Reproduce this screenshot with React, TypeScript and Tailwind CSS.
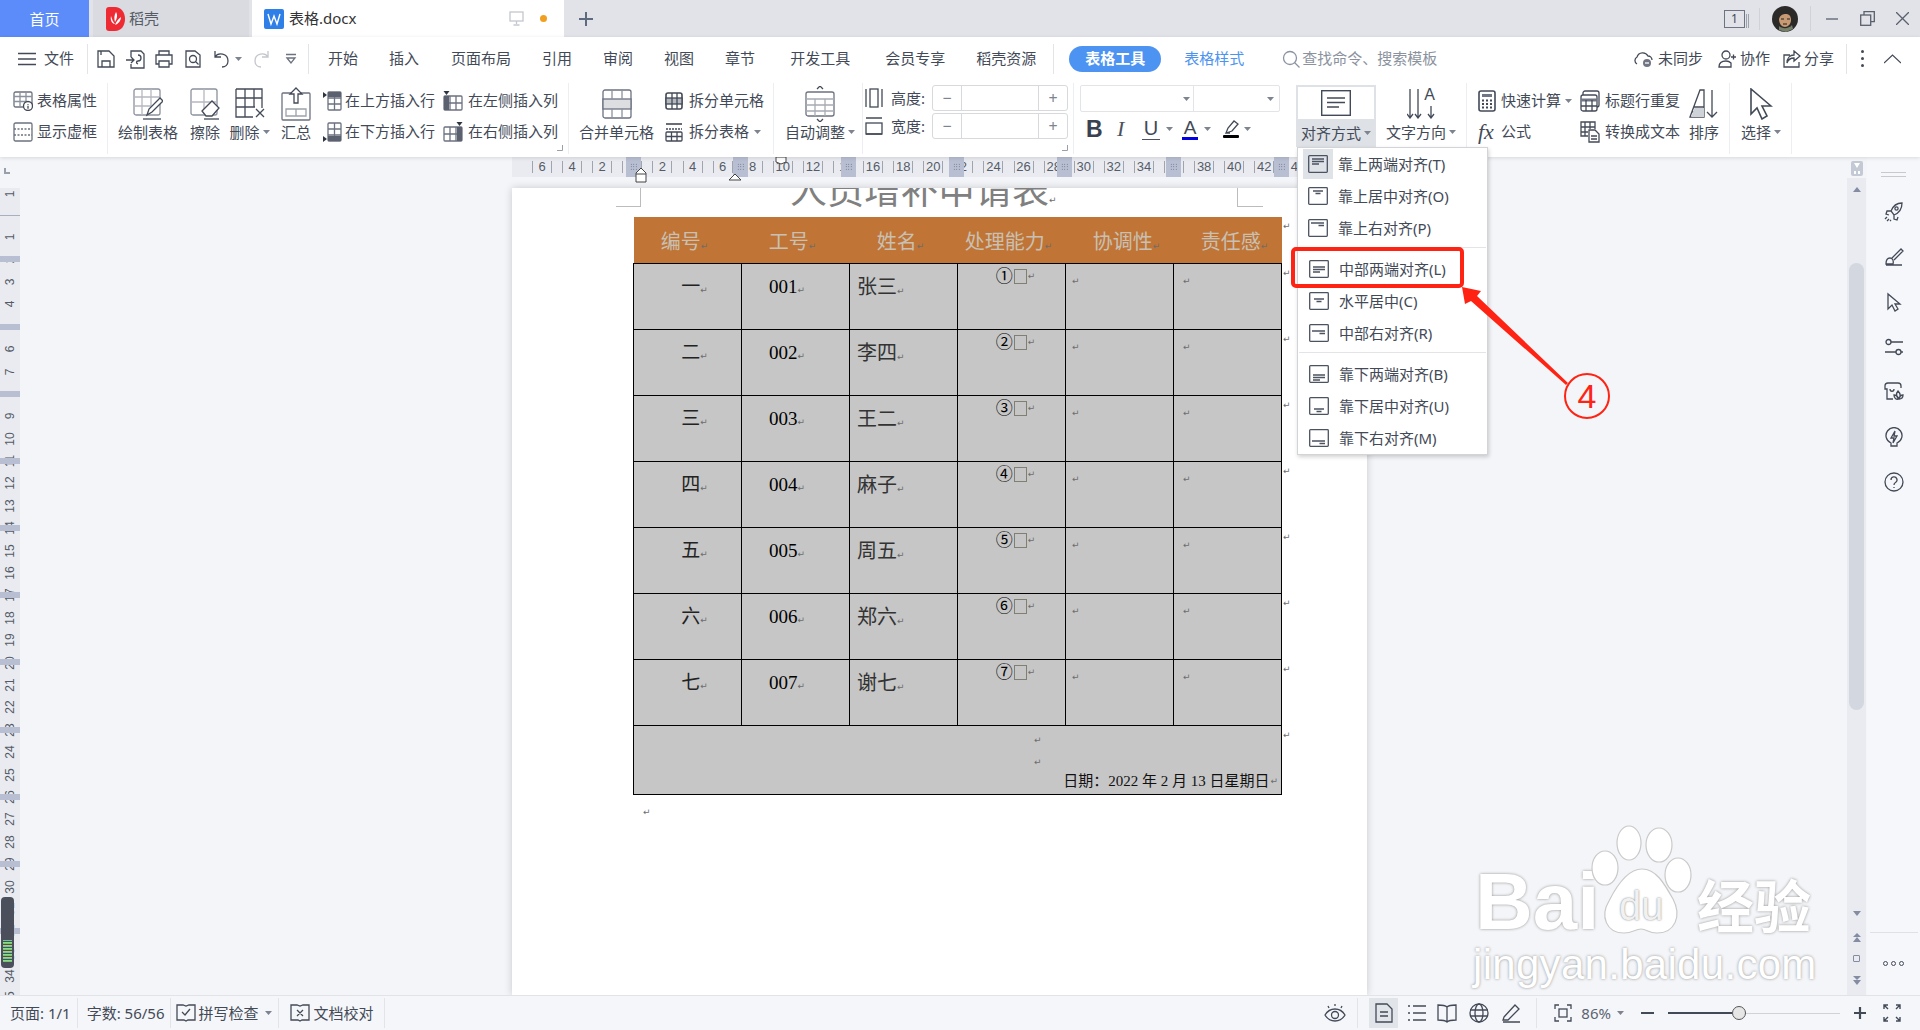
import React from 'react';

const ink = '#434a57';

function Ic({ w = 20, h = 20, children, className = '' }: { w?: number; h?: number; children: React.ReactNode; className?: string }) {
  return (
    <svg width={w} height={h} viewBox={`0 0 ${w} ${h}`} fill="none" stroke={ink} strokeWidth="1.3" className={`shrink-0 ${className}`}>
      {children}
    </svg>
  );
}

function Caret({ className = '' }: { className?: string }) {
  return (
    <svg width="7" height="4" viewBox="0 0 7 4" className={`shrink-0 ${className}`}>
      <path d="M0 0h7L3.5 4z" fill="#7d838f" />
    </svg>
  );
}

function Sep({ className = '' }: { className?: string }) {
  return <div className={`w-px h-[30px] bg-[#e2e4e8] shrink-0 ${className}`} />;
}

function Ret({ className = '' }: { className?: string }) {
  return <span className={`font-['DejaVu_Sans',sans-serif] text-[9px] leading-none text-[#6d6d6d] ${className}`}>↵</span>;
}

function Big({ icon, label, caret, className = '' }: { icon: React.ReactNode; label: string; caret?: boolean; className?: string }) {
  return (
    <div className={`flex flex-col items-center shrink-0 pt-[3px] ${className}`}>
      <div className="h-[36px] flex items-center justify-center">{icon}</div>
      <div className="h-[20px] flex items-center gap-[3px] whitespace-nowrap">
        {label}
        {caret && <Caret />}
      </div>
    </div>
  );
}

function Small({ icon, label, caret, gap = 'gap-[5px]' }: { icon: React.ReactNode; label: string; caret?: boolean; gap?: string }) {
  return (
    <div className={`h-[31px] flex items-center whitespace-nowrap ${gap}`}>
      {icon}
      <span>{label}</span>
      {caret && <Caret className="ml-[-1px]" />}
    </div>
  );
}

function InsertIcon({ dir }: { dir: 'up' | 'down' | 'left' | 'right' }) {
  if (dir === 'up' || dir === 'down') {
    const bar = dir === 'up' ? 1 : 14;
    return (
      <Ic w={20} h={20}>
        <rect x="6" y="1" width="13" height="18" rx="1" stroke="#6c7280" />
        <path d="M6 7H19M6 13H19M12.5 1V19" stroke="#6c7280" />
        <rect x="6" y={bar} width="13" height="5" fill="#5b616e" stroke="none" />
        <path d={`M1 ${bar}l4 3-4 3z`} fill="#2f3540" stroke="none" />
      </Ic>
    );
  }
  const x = dir === 'left' ? 1 : 14;
  return (
    <Ic w={20} h={20}>
      <rect x="1" y="5" width="18" height="14" rx="1" stroke="#6c7280" />
      <path d="M7 5V19M13 5V19M1 12H19" stroke="#6c7280" />
      <rect x={x} y="5" width="5" height="14" fill="#5b616e" stroke="none" />
      <path d={`M${x - 0.5} 0h6l-3 4z`} fill="#2f3540" stroke="none" />
    </Ic>
  );
}

function AlignGlyph({ v, h }: { v: 'top' | 'mid' | 'bot'; h: 'just' | 'center' | 'right' }) {
  const y = v === 'top' ? 4 : v === 'mid' ? 7 : 10;
  return (
    <svg width="20" height="18" viewBox="0 0 20 18" fill="none" stroke="#4b5260" strokeWidth="1.3" className="shrink-0">
      <rect x=".7" y=".7" width="18.6" height="16.6" rx=".8" />
      {h === 'just' && <path d={`M4 ${y}H16M4 ${y + 2.5}H16M4 ${y + 5}H11`} />}
      {h === 'center' && <path d={`M5 ${y + (v === 'bot' ? 2 : 0)}H15M7.5 ${y + 2.5 + (v === 'bot' ? 2 : 0)}H12.5`} />}
      {h === 'right' && <path d={`M3 ${y + (v === 'bot' ? 2 : 0)}H16M10.5 ${y + 2.5 + (v === 'bot' ? 2 : 0)}H16`} />}
    </svg>
  );
}

function Corner() {
  return (
    <svg width="6" height="6" viewBox="0 0 6 6" className="absolute right-[5px] bottom-[3px]">
      <path d="M5.5 0v5.5H0" stroke="#9aa0ab" fill="none" />
    </svg>
  );
}

function Tabs() {
  return (
    <div className="h-[37px] bg-[#e1e3e8] flex shrink-0 relative">
      <div className="w-[89px] bg-[#5b8cfa] text-white flex items-center justify-center pt-[1px]">首页</div>
      <div className="ml-[4px] w-[156px] bg-[#d9dbe0] flex items-center pl-[13px] text-[#555b66]">
        <svg width="19" height="24" viewBox="0 0 19 24" className="shrink-0">
          <path d="M0 3a3 3 0 0 1 3-3h6c6 0 10 5 10 12s-4 12-10 12H3a3 3 0 0 1-3-3z" fill="#ee2b33" />
          <path d="M10 5c2 3 1 7-1 10-1-3-1-7 1-10zM5 9c1 3 2 6 4 8-3 0-5-4-4-8zM15 10c0 4-3 7-6 8 1-3 3-6 6-8z" fill="#fff" />
        </svg>
        <span className="ml-[4px]">稻壳</span>
      </div>
      <div className="ml-[3px] w-[312px] bg-white flex items-center pl-[12px] text-[#333]">
        <svg width="20" height="20" viewBox="0 0 20 20" className="shrink-0">
          <rect width="20" height="20" rx="2" fill="#2f7fe8" />
          <path d="M4 5l3 10 3-8 3 8 3-10" fill="none" stroke="#fff" strokeWidth="1.4" />
        </svg>
        <span className="ml-[5px]">表格.docx</span>
        <svg width="15" height="15" viewBox="0 0 15 15" fill="none" stroke="#c3c7cf" strokeWidth="1.3" className="ml-[153px]">
          <rect x="1" y="1" width="13" height="9" />
          <path d="M7.5 10v3M4.5 14h6" />
        </svg>
        <div className="ml-[16px] w-[7px] h-[7px] rounded-full bg-[#f0a01e]" />
      </div>
      <svg width="14" height="14" viewBox="0 0 14 14" className="ml-[15px] self-center" stroke="#5e6a80" strokeWidth="2">
        <path d="M7 0v14M0 7h14" />
      </svg>
      <div className="ml-auto flex items-center mr-[11px]">
        <div className="flex items-end">
          <div className="w-[21px] h-[18px] border border-[#6d7380] text-[12px] leading-[16px] text-center text-[#434a57]">1</div>
          <div className="ml-[1px] w-[1px] h-[14px] bg-[#9da2ac]" />
          <div className="ml-[1px] w-[1px] h-[14px] bg-[#9da2ac]" />
        </div>
        <div className="ml-[10px] w-px h-[22px] bg-[#d0d2d7]" />
        <svg width="26" height="26" viewBox="0 0 26 26" className="ml-[12px]">
          <circle cx="13" cy="13" r="13" fill="#2b2a28" />
          <path d="M7 13c1-4 4-5 7-5s5 2 5 6-3 7-6 7-6-3-6-8z" fill="#c79a73" />
          <path d="M7 20c3 3 10 3 13-1l1 4-7 3-7-2z" fill="#77806a" />
          <path d="M9 13h3M15 13h3M11 18h4" stroke="#222" strokeWidth="1.2" />
        </svg>
        <div className="ml-[12px] w-px h-[25px] bg-[#d0d2d7]" />
        <svg width="12" height="2" viewBox="0 0 12 2" className="ml-[15px]"><path d="M0 1h12" stroke="#5a606c" strokeWidth="1.3" /></svg>
        <svg width="15" height="15" viewBox="0 0 15 15" fill="none" stroke="#5a606c" strokeWidth="1.3" className="ml-[22px]">
          <rect x=".7" y="4" width="10" height="10.3" />
          <path d="M4 4V.7h10.3v10H11" />
        </svg>
        <svg width="13" height="13" viewBox="0 0 13 13" className="ml-[21px]" stroke="#5a606c" strokeWidth="1.3"><path d="M0 0l13 13M13 0L0 13" /></svg>
      </div>
    </div>
  );
}

function TopMenu() {
  return (
    <div className="h-[43px] flex items-center whitespace-nowrap">
      <Ic w={18} h={14} className="ml-[18px]"><path d="M0 1.5h18M0 7h18M0 12.5h18" /></Ic>
      <span className="ml-[8px]">文件</span>
      <Sep className="ml-[13px]" />
      <Ic className="ml-[8px]"><path d="M2 2h11l5 5v11H2zM6 18v-6h8v6M5 2v4" /></Ic>
      <Ic className="ml-[10px]"><path d="M5 8V2h10l3 3v14H5v-4M0 11h8m-3-3l3 3-3 3M12 6a3 3 0 1 1 0 6c-2 0-2 2 0 3" /></Ic>
      <Ic className="ml-[8px]"><path d="M5 6V2h10v4M5 15H2V6h16v9h-3M5 12h10v6H5z" /></Ic>
      <Ic className="ml-[9px]"><path d="M3 18V2h9l5 4v12z" /><circle cx="10" cy="10" r="3.5" /><path d="M12.5 12.5l3 3" /></Ic>
      <Ic className="ml-[9px]"><path d="M3 2v6h6M3 8c3-5 13-4 13 4 0 4-3 6-6 6" /></Ic>
      <Caret className="ml-[3px]" />
      <svg width="20" height="20" viewBox="0 0 20 20" fill="none" stroke="#c3c6cc" strokeWidth="1.3" className="ml-[9px]"><path d="M17 2v6h-6M17 8c-3-5-13-4-13 4 0 4 3 6 6 6" /></svg>
      <Ic w={14} h={12} className="ml-[13px]"><path d="M2 1.500h10M3 5l4 5 4-5z" stroke="#6c7280" /></Ic>
      <Sep className="ml-[10px]" />
      <span className="ml-[19px]">开始</span>
      <span className="ml-[31px]">插入</span>
      <span className="ml-[32px]">页面布局</span>
      <span className="ml-[31px]">引用</span>
      <span className="ml-[31px]">审阅</span>
      <span className="ml-[31px]">视图</span>
      <span className="ml-[31px]">章节</span>
      <span className="ml-[35px]">开发工具</span>
      <span className="ml-[35px]">会员专享</span>
      <span className="ml-[31px]">稻壳资源</span>
      <Sep className="ml-[17px]" />
      <div className="ml-[15px] w-[92px] h-[26px] rounded-full bg-[#4c93f2] text-white flex items-center justify-center font-bold">表格工具</div>
      <span className="ml-[23px] text-[#4c93f2]">表格样式</span>
      <svg width="18" height="18" viewBox="0 0 18 18" fill="none" stroke="#8b93a3" strokeWidth="1.3" className="ml-[38px]"><circle cx="8" cy="8" r="6.5" /><path d="M12.5 12.5l5 5" /></svg>
      <span className="ml-[2px] text-[#8b929e]">查找命令、搜索模板</span>
      <div className="ml-auto flex items-center mr-[19px]">
        <Ic w={20} h={18}><path d="M4 14a4 4 0 0 1 0-7 6 6 0 0 1 11-1 4 4 0 0 1 4 4" /><circle cx="14" cy="13" r="4" fill="#707683" stroke="none" /><path d="M12 13h4" stroke="#fff" /></Ic>
        <span className="ml-[5px]">未同步</span>
        <Ic w={18} h={18} className="ml-[15px]"><circle cx="8" cy="5" r="4" /><path d="M1 17c0-4 3-6 7-6 2 0 4 1 5 2v4zM13 7h5M15.5 4.5v5" /></Ic>
        <span className="ml-[4px]">协作</span>
        <Ic w={18} h={18} className="ml-[13px]"><path d="M7 5H1v12h15v-5M11 1l6 5-6 5V8C7 8 5 10 4 13c0-5 3-8 7-8z" /></Ic>
        <span className="ml-[3px]">分享</span>
        <Sep className="ml-[12px]" />
        <div className="ml-[14px] flex flex-col gap-[4px]">
          <div className="w-[3px] h-[3px] rounded-full bg-[#434a57]" />
          <div className="w-[3px] h-[3px] rounded-full bg-[#434a57]" />
          <div className="w-[3px] h-[3px] rounded-full bg-[#434a57]" />
        </div>
        <svg width="17" height="10" viewBox="0 0 17 10" fill="none" stroke="#434a57" strokeWidth="1.2" className="ml-[20px]"><path d="M0 9l8.5-8L17 9" /></svg>
      </div>
    </div>
  );
}

function Ribbon() {
  return (
    <div className="h-[77px] flex py-[3px] whitespace-nowrap">
      <div className="w-[108px] border-r border-[#eceef1] pl-[13px] pt-[2px] shrink-0">
        <Small
          gap="gap-[4px]"
          label="表格属性"
          icon={
            <Ic>
              <rect x="1" y="1" width="18" height="15" rx="1.5" stroke="#6c7280" />
              <path d="M1 5.5H19M1 10.5H14M7 1V16M13 1V10" stroke="#8c919c" />
              <circle cx="15" cy="15" r="4.5" fill="#fff" />
              <path d="M15 13v.8M15 14.8v3" />
            </Ic>
          }
        />
        <Small
          gap="gap-[4px]"
          label="显示虚框"
          icon={
            <Ic>
              <rect x="1" y="1" width="18" height="18" rx="1.5" stroke="#6c7280" />
              <path d="M1 7H19M1 13H19" stroke="#6c7280" strokeDasharray="2 1.5" />
            </Ic>
          }
        />
      </div>
      <div className="w-[461px] border-r border-[#eceef1] flex relative shrink-0">
        <Big
          className="ml-[10px] w-[60px]"
          label="绘制表格"
          icon={
            <Ic w={30} h={32}>
              <rect x="1" y="1" width="26" height="26" rx="2" stroke="#8c919c" />
              <path d="M1 9H27M1 18H18M9 1V27M18 1V18" stroke="#b5b8bf" />
              <path d="M14 27l2-6 11-11 3 3-11 11z" fill="#fff" />
              <path d="M10 31H28" />
            </Ic>
          }
        />
        <Big
          className="ml-[12px] w-[30px]"
          label="擦除"
          icon={
            <Ic w={30} h={32}>
              <rect x="1" y="1" width="26" height="26" rx="2" stroke="#8c919c" />
              <path d="M14 1V27M1 14H27" stroke="#b5b8bf" />
              <path d="M12 23l10-10 7 7-7 8h-6z" fill="#fff" />
              <path d="M14 31H29" />
            </Ic>
          }
        />
        <Big
          className="ml-[9px] w-[41px]"
          caret
          label="删除"
          icon={
            <Ic w={30} h={32}>
              <path d="M1 1H27V20M1 1V29H18M1 10H27M1 19H20M10 1V29M19 1V19" stroke="#434a57" />
              <path d="M21 21l8 8M29 21l-8 8" />
            </Ic>
          }
        />
        <Big
          className="ml-[11px] w-[30px]"
          label="汇总"
          icon={
            <Ic w={30} h={34}>
              <path d="M10 6H2a1 1 0 0 0-1 1v25a1 1 0 0 0 1 1h26a1 1 0 0 0 1-1V7a1 1 0 0 0-1-1h-8" stroke="#6c7280" />
              <path d="M15 1l6 6h-4v9h-4V7H9z" />
              <path d="M5 22H25V29H5zM15 22V29" stroke="#9ca1ab" />
            </Ic>
          }
        />
        <div className="ml-[11px] pt-[2px] flex flex-col">
          <Small label="在上方插入行" icon={<InsertIcon dir="up" />} gap="gap-[3px]" />
          <Small label="在下方插入行" icon={<InsertIcon dir="down" />} gap="gap-[3px]" />
        </div>
        <div className="ml-[8px] pt-[2px] flex flex-col">
          <Small label="在左侧插入列" icon={<InsertIcon dir="left" />} />
          <Small label="在右侧插入列" icon={<InsertIcon dir="right" />} />
        </div>
        <Corner />
      </div>
      <div className="w-[205px] border-r border-[#eceef1] flex shrink-0">
        <Big
          className="ml-[10px] w-[75px]"
          label="合并单元格"
          icon={
            <Ic w={30} h={32}>
              <rect x="1" y="2" width="28" height="28" rx="2" stroke="#6c7280" />
              <rect x="1" y="11" width="28" height="10" fill="#dcdee2" stroke="#6c7280" />
              <path d="M10 2V11M20 2V11M10 21V30M20 21V30" stroke="#8c919c" />
            </Ic>
          }
        />
        <div className="ml-[11px] pt-[2px] flex flex-col">
          <Small
            label="拆分单元格"
            gap="gap-[6px]"
            icon={
              <Ic w={18} h={20}>
                <rect x="1" y="2" width="16" height="16" rx="2" strokeWidth="1.6" />
                <rect x="1" y="7" width="16" height="6" fill="#b5b8bf" />
                <path d="M7 2V18M12 2V18" />
              </Ic>
            }
          />
          <Small
            label="拆分表格"
            caret
            gap="gap-[6px]"
            icon={
              <Ic w={18} h={20}>
                <path d="M1 2H17" strokeWidth="1.6" />
                <path d="M1 7H17" strokeDasharray="2 1" />
                <rect x="1" y="10" width="16" height="9" rx="1" />
                <path d="M1 14.5H17M6.5 10V19M12 10V19" />
              </Ic>
            }
          />
        </div>
      </div>
      <div className="w-[89px] border-r border-[#eceef1] flex shrink-0">
        <Big
          className="ml-[11px]"
          caret
          label="自动调整"
          icon={
            <Ic w={30} h={36}>
              <path d="M12 3l3-3 3 3M12 33l3 3 3-3" />
              <rect x="1" y="6" width="28" height="24" rx="2" stroke="#6c7280" />
              <path d="M1 13H29M1 19H29M1 25H29M10 13V30M20 13V30" stroke="#a7abb3" />
            </Ic>
          }
        />
      </div>
      <div className="w-[211px] border-r border-[#eceef1] relative shrink-0 pt-[2px] pl-[2px] flex flex-col gap-[2px]">
        {['高度:', '宽度:'].map((t, i) => (
          <div key={t} className="h-[26px] flex items-center">
            <Ic w={18} h={20}>
              {i === 0 ? (
                <><path d="M1 1V19M17 1V19" /><rect x="5" y="1" width="8" height="18" /></>
              ) : (
                <><path d="M1 2H17M1 18H17" /><rect x="1" y="7" width="16" height="11" /></>
              )}
            </Ic>
            <span className="ml-[8px] w-[41px]">{t}</span>
            <div className="w-[136px] h-[26px] border border-[#d7d9dd] rounded-[3px] flex text-[#7d838f] text-[16px] leading-[24px] text-center">
              <div className="w-[29px] border-r border-[#d7d9dd]">−</div>
              <div className="flex-1" />
              <div className="w-[29px] border-l border-[#d7d9dd]">+</div>
            </div>
          </div>
        ))}
        <Corner />
      </div>
      <div className="w-[393px] border-r border-[#eceef1] flex shrink-0">
        <div className="ml-[6px] w-[200px] pt-[2px] flex flex-col shrink-0">
          <div className="h-[27px] border border-[#e2e4e8] rounded-[2px] flex">
            <div className="w-[113px] border-r border-[#e2e4e8] flex items-center justify-end pr-[3px]"><Caret /></div>
            <div className="flex-1 flex items-center justify-end pr-[5px]"><Caret /></div>
          </div>
          <div className="h-[32px] mt-[1px] flex items-center">
            <span className="ml-[6px] w-[16px] text-[23px] font-bold font-['Liberation_Sans',sans-serif] text-[#3a4150] leading-none">B</span>
            <span className="ml-[15px] w-[10px] text-[22px] italic font-['Liberation_Serif',serif] text-[#4c5260] leading-none">I</span>
            <span className="ml-[15px] w-[18px] text-[20px] font-['Liberation_Sans',sans-serif] leading-[21px] text-center border-b border-[#4c5260]">U</span>
            <Caret className="ml-[6px]" />
            <div className="ml-[9px] w-[16px] flex flex-col items-center">
              <span className="text-[19px] font-['Liberation_Sans',sans-serif] leading-[19px]">A</span>
              <div className="w-[16px] h-[3px] bg-[#0000e0]" />
            </div>
            <Caret className="ml-[6px]" />
            <div className="ml-[11px] w-[18px] flex flex-col items-center">
              <Ic w={16} h={15}><path d="M3 13l2-5 6-7 4 3-6 7zM3 13h4" /></Ic>
              <div className="w-[16px] h-[3px] bg-black rounded-[1px]" />
            </div>
            <Caret className="ml-[4px]" />
          </div>
        </div>
        <div className="ml-[16px] mt-[2px] w-[80px] h-[62px] bg-[#dee2e7] flex flex-col items-center shrink-0">
          <div className="w-[76px] h-[32px] mt-[2px] bg-white flex items-center justify-center">
            <svg width="30" height="26" viewBox="0 0 30 26" fill="none" stroke={ink} strokeWidth="1.4">
              <rect x=".7" y=".7" width="28.6" height="24.6" />
              <path d="M6 8H24M6 12.5H24M6 17H18" />
            </svg>
          </div>
          <div className="h-[28px] flex items-center gap-[3px]">对齐方式<Caret /></div>
        </div>
        <Big
          className="ml-[10px]"
          caret
          label="文字方向"
          icon={
            <div className="flex items-end h-[30px] w-[28px] relative">
              <Ic w={28} h={30}>
                <path d="M3 0V28M0 25l3 4 3-4M11 0V28M8 25l3 4 3-4M24 17V28M21 25l3 4 3-4" />
              </Ic>
              <span className="absolute right-0 top-[-3px] text-[16px] leading-[18px] font-['Liberation_Sans',sans-serif]">A</span>
            </div>
          }
        />
      </div>
      <div className="w-[263px] border-r border-[#eceef1] flex shrink-0">
        <div className="ml-[11px] pt-[2px] flex flex-col">
          <Small
            label="快速计算"
            caret
            icon={
              <Ic w={18} h={22}>
                <rect x="1" y="1" width="16" height="20" rx="2" strokeWidth="1.6" />
                <rect x="4" y="4" width="10" height="3" fill="#707683" stroke="none" />
                <path d="M4 10.5h10M4 14h10M4 17.5h10" strokeDasharray="2 2" strokeWidth="2" />
              </Ic>
            }
          />
          <div className="h-[31px] flex items-center">
            <span className="w-[18px] font-['Liberation_Serif',serif] italic text-[22px] leading-none">fx</span>
            <span className="ml-[5px]">公式</span>
          </div>
        </div>
        <div className="ml-[8px] pt-[2px] flex flex-col">
          <Small
            label="标题行重复"
            icon={
              <Ic w={20} h={22}>
                <rect x="3" y="1" width="16" height="16" rx="2" />
                <rect x="1" y="5" width="16" height="16" rx="2" fill="#fff" />
                <path d="M1 10H17" strokeWidth="3" stroke="#707683" />
                <path d="M1 16H17M6 10V21M12 10V21" />
              </Ic>
            }
          />
          <Small
            label="转换成文本"
            icon={
              <Ic w={20} h={22}>
                <path d="M8 15H1V1H15V8M1 6H15M1 11H8M5 1V15M10 1V8" />
                <path d="M9 9h6l4 4v8H9zM11 15h6M11 18h6" fill="#fff" />
              </Ic>
            }
          />
        </div>
        <Big
          className="ml-[9px] w-[30px]"
          label="排序"
          icon={
            <Ic w={30} h={30}>
              <path d="M1 28L11 1H15V28zM5 18H15M3 23H15" />
              <path d="M2 28L5.5 19H15V28z" fill="#cfd2d7" stroke="none" />
              <path d="M23 1V28M18 23l5 5 5-5" />
            </Ic>
          }
        />
      </div>
      <div className="w-[62px] border-r border-[#eceef1] flex shrink-0">
        <Big
          className="ml-[11px]"
          caret
          label="选择"
          icon={
            <Ic w={24} h={32}>
              <path d="M2 1V26L8 20L13 31L18 28L13 18H22z" strokeWidth="1.6" />
            </Ic>
          }
        />
      </div>
    </div>
  );
}

const rulerLabels = ['6', '4', '2', '', '2', '4', '6', '8', '10', '12', '1', '16', '18', '20', '2', '24', '26', '28', '30', '32', '34', '', '38', '40', '42', '4'];
const rulerBlocks = ['left-[114px]', 'left-[221px]', 'left-[329px]', 'left-[437px]', 'left-[545px]', 'left-[654px]', 'left-[762px]'];

function TopRuler() {
  return (
    <div className="h-[31px] bg-[#f4f5f8] shrink-0 pl-[492px] relative">
      <div className="h-[20px] w-[855px] bg-[#e9ebf1] relative flex pl-[15px] text-[13px] text-[#555b66] font-['Liberation_Sans',sans-serif]">
        {rulerLabels.map((t, i) => (
          <div key={i} className="w-[30.1px] h-[20px] flex items-center justify-center shrink-0">
            <div className="w-[20px] h-[12px] border-x border-[#9fa4ad] flex items-center justify-center">{t}</div>
          </div>
        ))}
        {rulerBlocks.map((c) => (
          <div key={c} className={`absolute top-0 w-[15px] h-[20px] bg-[#b8bfd2] flex items-center justify-center ${c}`}>
            <div className="w-[8px] h-[8px] bg-[radial-gradient(#5c6478_0.7px,transparent_0.8px)] bg-[length:2.5px_2.5px]" />
          </div>
        ))}
        <svg width="240" height="31" viewBox="0 0 240 31" fill="#fff" stroke="#444" strokeWidth="1" className="absolute left-[121px] top-0 overflow-visible">
          <path d="M8 11l5 5v9H3v-9zM3 17H13" />
          <path d="M143 0h10v5l-5 2-5-2z" />
          <path d="M102 17l6 6H96z" />
        </svg>
      </div>
    </div>
  );
}

const rowsData = [
  ['一', '001', '张三', '①'],
  ['二', '002', '李四', '②'],
  ['三', '003', '王二', '③'],
  ['四', '004', '麻子', '④'],
  ['五', '005', '周五', '⑤'],
  ['六', '006', '郑六', '⑥'],
  ['七', '007', '谢七', '⑦'],
];
const heads = [
  { t: '编号', c: 'pr-[6px]' },
  { t: '工号', c: 'pr-[6px]' },
  { t: '姓名', c: 'pr-[6px]' },
  { t: '处理能力', c: 'pr-[6px]' },
  { t: '协调性', c: 'pl-[14px]' },
  { t: '责任感', c: 'pl-[14px]' },
];
const cellCls = 'border border-black align-top p-0 bg-[#c6c6c6]';

function DocTable() {
  return (
    <div className="flex ml-[121px] font-['Liberation_Serif','Noto_Sans_CJK_SC',serif]">
      <table className="w-[649px] table-fixed border-collapse shrink-0">
        <tbody>
          <tr className="h-[46px] bg-[#c07536]">
            {heads.map((h) => (
              <td key={h.t} className={`p-0 pt-[4px] text-center align-middle text-[20px] text-[#c9c0b4] ${h.c}`}>
                {h.t}
                <Ret />
              </td>
            ))}
          </tr>
          {rowsData.map((r) => (
            <tr key={r[0]} className="h-[66px]">
              <td className={cellCls}>
                <div className="pt-[9px] pl-[14px] text-center text-[19px] leading-[28px] text-[#222]">{r[0]}<Ret /></div>
              </td>
              <td className={cellCls}>
                <div className="pt-[9px] pr-[17px] text-center text-[19px] leading-[28px] text-black">{r[1]}<Ret /></div>
              </td>
              <td className={cellCls}>
                <div className="pt-[9px] pl-[7px] text-[20px] leading-[28px] text-[#333]">{r[2]}<Ret /></div>
              </td>
              <td className={cellCls}>
                <div className="pt-[1px] flex items-center justify-center h-[24px] pl-[8px]">
                  <span className="text-[17px] leading-none text-black">{r[3]}</span>
                  <span className="w-[13px] h-[15px] border border-[#7f7f72] ml-[1px]" />
                  <Ret className="ml-[1px]" />
                </div>
              </td>
              <td className={cellCls}><div className="pt-[8px] pl-[6px] leading-[14px]"><Ret /></div></td>
              <td className={cellCls}><div className="pt-[8px] pl-[9px] leading-[14px]"><Ret /></div></td>
            </tr>
          ))}
          <tr className="h-[68px]">
            <td colSpan={6} className={cellCls}>
              <div className="flex flex-col">
                <div className="h-[22px] pt-[6px] pl-[400px] leading-[12px]"><Ret /></div>
                <div className="h-[22px] pt-[6px] pl-[400px] leading-[12px]"><Ret /></div>
                <div className="h-[24px] flex items-center justify-end pr-[3px] text-[15px] text-[#111]">
                  日期：2022 年 2 月 13 日星期日<Ret className="ml-[1px]" />
                </div>
              </div>
            </td>
          </tr>
        </tbody>
      </table>
      <div className="flex flex-col pl-[1px]">
        <div className="h-[46px] leading-none"><Ret /></div>
        {rowsData.map((r) => (
          <div key={r[0]} className="h-[66px] pt-[1px] leading-none"><Ret /></div>
        ))}
        <div className="pt-[1px] leading-none"><Ret /></div>
      </div>
    </div>
  );
}

function Page() {
  return (
    <div className="w-[855px] ml-[492px] h-full bg-white shadow-[0_0_8px_rgba(0,0,0,0.18)] relative overflow-hidden shrink-0">
      <div className="absolute left-[104px] top-0 w-[25px] h-[19px] border-r border-b border-[#bcbcbc]" />
      <div className="absolute left-[725px] top-0 w-[26px] h-[19px] border-l border-b border-[#bcbcbc]" />
      <div className="h-[29px] relative overflow-hidden">
        <div className="absolute left-[278px] bottom-[8px] flex items-end whitespace-nowrap text-[37px] leading-[42px] font-normal text-[#808080] font-['Noto_Sans_CJK_SC',sans-serif]">
          人员增补申请表<Ret className="mb-[4px]" />
        </div>
      </div>
      <DocTable />
      <div className="ml-[131px] mt-[7px] leading-none"><Ret /></div>
    </div>
  );
}

function LeftRuler() {
  const nums = Array.from({ length: 36 }).map((_, i) => i);
  return (
    <div className="w-[20px] bg-[#e9ebf1] shrink-0 overflow-hidden relative text-[12px] text-[#555b66] font-['Liberation_Sans',sans-serif]">
      <div className="h-[31px] bg-[#f4f5f8] flex pl-[4px] pt-[11px]">
        <div className="w-[6px] h-[6px] border-l-2 border-b-2 border-[#9aa0ab]" />
      </div>
      <div className="h-[13px] flex items-center justify-center mt-[-1px]">
        <span className="-rotate-90">1</span>
      </div>
      <div className="h-[16px] border-b border-[#a9b0bd]" />
      <div className="h-[10px]" />
      {nums.slice(1).map((n) => (
        <div key={n} className="h-[22.4px] flex items-center justify-center relative">
          <span className="-rotate-90 whitespace-nowrap">{n}</span>
          {n % 3 === 2 && <div className="absolute left-0 right-0 top-[8px] h-[6px] bg-[#b8bfd2]" />}
        </div>
      ))}
    </div>
  );
}

function ScrollBar() {
  return (
    <div className="w-[19px] bg-[#e9ebf1] flex flex-col items-center shrink-0 mr-[1px]">
      <div className="w-full h-[21px] bg-[#f4f5f8] flex justify-center items-start pt-[4px]">
        <svg width="12" height="15" viewBox="0 0 12 15" className="shrink-0"><rect width="12" height="15" rx="2" fill="#c4c9d6" /><path d="M3 2h6L6 7z" fill="#fff" /><path d="M3 10h2v3H3zM7 10h2v3H7z" fill="#fff" /></svg>
      </div>
      <svg width="8" height="5" viewBox="0 0 8 5" className="mt-[9px]"><path d="M4 0l4 5H0z" fill="#848ca3" /></svg>
      <div className="w-[15px] h-[447px] mt-[71px] rounded-full bg-[#d3d7e0]" />
      <svg width="8" height="5" viewBox="0 0 8 5" className="mt-[201px]"><path d="M0 0h8L4 5z" fill="#848ca3" /></svg>
      <svg width="8" height="9" viewBox="0 0 8 9" className="mt-[17px]"><path d="M4 0l4 4H0zM4 4l4 5H0z" fill="#848ca3" /></svg>
      <div className="mt-[13px] w-[7px] h-[7px] border border-[#848ca3] rounded-[1px]" />
      <svg width="8" height="9" viewBox="0 0 8 9" className="mt-[14px]"><path d="M0 0h8L4 4zM0 4h8L4 9z" fill="#848ca3" /></svg>
    </div>
  );
}

function RightPanel() {
  return (
    <div className="flex-1 bg-[#f6f7fa] flex flex-col items-center pt-[15px] relative">
      <div className="w-[25px] h-[5px] border-y border-[#c6c9cf]" />
      <div className="mt-[25px] flex flex-col gap-[25px] items-center">
        <Ic><path d="M7 9C9 4 13 1 18 1c0 6-3 10-8 12zM7 9H3l-1 3 3 1M10 13v4l3 1 1-3M3 15l-2 2M5 17l-2 2M7 18l-1 1" /><circle cx="12.5" cy="6.5" r="1.6" /></Ic>
        <Ic><path d="M8 11L17 2l2 2-9 9M2 17c0-4 2-6 4-6s4 2 3 6zM2 18H18" /></Ic>
        <Ic><path d="M4 2V17L8 13L11 19L14 17L11 12H16z" /></Ic>
        <Ic><circle cx="4.5" cy="5" r="2.5" /><path d="M7 5H19M1 15H12" /><circle cx="14.5" cy="15" r="2.5" /><path d="M17 15H19" /></Ic>
        <Ic><path d="M9 17H3V7H1V4a3 3 0 0 1 3-3h10a3 3 0 0 1 3 3v2M6 7c0 3 4 3 4 0" /><path d="M14 9c2 2 3 5 1 8-3-2-3-6-1-8zM10 13c2 0 4 2 5 4-3 1-5-1-5-4zM19 13c0 3-2 4-4 4 0-2 2-4 4-4z" /></Ic>
        <Ic><path d="M7 16a8 8 0 1 1 6 0v3H7z" /><path d="M11 4L7 11h3l-1 5 4-7h-3z" /></Ic>
        <Ic><circle cx="10" cy="10" r="9" /><path d="M7 8a3 3 0 1 1 4.500 2.500c-1 .6-1.500 1.200-1.500 2.500M10 15v1" /></Ic>
      </div>
      <div className="mt-auto mb-[29px] w-[48px] flex flex-col items-center">
        <div className="w-full h-px bg-[#dfe1e6] mb-[28px]" />
        <div className="flex gap-[3px]">
          <div className="w-[5px] h-[5px] rounded-full border border-[#434a57]" />
          <div className="w-[5px] h-[5px] rounded-full border border-[#434a57]" />
          <div className="w-[5px] h-[5px] rounded-full border border-[#434a57]" />
        </div>
      </div>
    </div>
  );
}

function StatusBar() {
  return (
    <div className="h-[35px] bg-[#f5f6f9] border-t border-[#e1e3e7] flex items-center shrink-0 whitespace-nowrap relative">
      <span className="ml-[10px]">页面: 1/1</span>
      <Sep className="ml-[6px] h-[18px]" />
      <span className="ml-[9px]">字数: 56/56</span>
      <Sep className="ml-[5px] h-[18px]" />
      <Ic className="ml-[5px]"><path d="M1 2h6l3 1 3-1h6v15h-7l-2 1-2-1H1zM6 9l3 3 5-6" /></Ic>
      <span className="ml-[3px]">拼写检查</span>
      <Caret className="ml-[6px]" />
      <Sep className="ml-[6px] h-[18px]" />
      <Ic className="ml-[11px]"><path d="M1 2h6l3 1 3-1h6v15h-7l-2 1-2-1H1zM7 7l6 6M13 7l-6 6" /></Ic>
      <span className="ml-[4px]">文档校对</span>
      <Sep className="ml-[10px] h-[18px]" />
      <div className="ml-auto flex items-center mr-[19px]">
        <Ic w={22} h={20}><path d="M1 12c3-5 7-6 10-6s7 1 10 6c-3 5-7 6-10 6s-7-1-10-6z" /><circle cx="11" cy="12" r="3.5" /><path d="M11 1v2M4 3l1 2M18 3l-1 2" /></Ic>
        <Sep className="ml-[11px] h-[20px]" />
        <div className="ml-[11px] w-[29px] h-[30px] bg-[#e1e5ea] flex items-center justify-center">
          <Ic w={18} h={20}><path d="M1 1h11l5 5v13H1zM5 9h8M5 13h8" /></Ic>
        </div>
        <Ic className="ml-[9px]"><path d="M6 3h13M6 10h13M6 17h13M1 3h2M1 10h2M1 17h2" /></Ic>
        <Ic className="ml-[10px]"><path d="M10 4C8 2 4 2 1 2v15c3 0 7 0 9 2 2-2 6-2 9-2V2c-3 0-7 0-9 2zM10 4v15" /></Ic>
        <Ic className="ml-[12px]"><circle cx="10" cy="10" r="9" /><ellipse cx="10" cy="10" rx="4" ry="9" /><path d="M1 7h18M1 13h18" /></Ic>
        <Ic className="ml-[12px]"><path d="M3 14L14 2l4 4L7 17H2zM2 19H19" /></Ic>
        <Sep className="ml-[15px] h-[20px]" />
        <Ic w={18} h={18} className="ml-[17px]"><path d="M1 5V1h4M13 1h4v4M17 13v4h-4M5 17H1v-4" /><rect x="5" y="5" width="8" height="8" /></Ic>
        <span className="ml-[9px] text-[#5b6472]">86%</span>
        <Caret className="ml-[6px]" />
        <div className="ml-[17px] w-[13px] h-[2.500px] bg-[#434a57]" />
        <div className="ml-[14px] w-[172px] h-[15px] flex items-center relative">
          <div className="w-[64px] h-[1.500px] bg-[#434a57]" />
          <div className="w-[14px] h-[14px] rounded-full border border-[#555] bg-[#e6e6e6] shrink-0" />
          <div className="flex-1 h-px bg-[#cfd2d7]" />
        </div>
        <svg width="12" height="12" viewBox="0 0 12 12" className="ml-[14px]" stroke="#434a57" strokeWidth="2.200"><path d="M6 0v12M0 6h12" /></svg>
        <svg width="18" height="18" viewBox="0 0 18 18" fill="none" stroke="#434a57" strokeWidth="1.400" className="ml-[17px]"><path d="M1 5V1h4M1 1l4 4M17 5V1h-4M17 1l-4 4M1 13v4h4M1 17l4-4M17 13v4h-4M17 17l-4-4" /></svg>
      </div>
    </div>
  );
}

const menuSections: { label: string; v: 'top' | 'mid' | 'bot'; h: 'just' | 'center' | 'right' }[][] = [
  [
    { label: '靠上两端对齐(T)', v: 'top', h: 'just' },
    { label: '靠上居中对齐(O)', v: 'top', h: 'center' },
    { label: '靠上右对齐(P)', v: 'top', h: 'right' },
  ],
  [
    { label: '中部两端对齐(L)', v: 'mid', h: 'just' },
    { label: '水平居中(C)', v: 'mid', h: 'center' },
    { label: '中部右对齐(R)', v: 'mid', h: 'right' },
  ],
  [
    { label: '靠下两端对齐(B)', v: 'bot', h: 'just' },
    { label: '靠下居中对齐(U)', v: 'bot', h: 'center' },
    { label: '靠下右对齐(M)', v: 'bot', h: 'right' },
  ],
];

function AlignMenu() {
  return (
    <div className="absolute left-[1297px] top-[147px] w-[191px] h-[308px] bg-white border border-[#d2d4d8] shadow-[1px_2px_4px_rgba(0,0,0,0.18)] whitespace-nowrap">
      {menuSections.map((sec, si) => (
        <div key={si} className={si > 0 ? 'border-t border-[#e3e4e7] mx-[1px] pt-[5px] mt-[3px]' : ''}>
          {sec.map((it, i) => (
            <div key={it.label} className="h-[32px] flex items-center -ml-[1px]">
              <div className={`ml-[6px] w-[30px] h-[30px] flex items-center justify-center ${si === 0 && i === 0 ? 'bg-[#dfe3e8]' : ''}`}>
                <AlignGlyph v={it.v} h={it.h} />
              </div>
              <span className="ml-[5px]">{it.label}</span>
            </div>
          ))}
        </div>
      ))}
    </div>
  );
}

function Annotation() {
  return (
    <>
      <div className="absolute left-[1291px] top-[247px] w-[173px] h-[41px] border-[4px] border-[#ff2313] rounded-[5px]" />
      <svg width="140" height="120" viewBox="0 0 140 120" className="absolute left-[1450px] top-[280px]">
        <path d="M12 7L31 11L27 16L118 103L116 105L21 21L15 24z" fill="#ff2313" />
      </svg>
      <div className="absolute left-[1564px] top-[373px] w-[46px] h-[46px] rounded-full border-[2.5px] border-[#ff2313] bg-transparent flex items-center justify-center text-[#ff2313] text-[34px] leading-none font-['Liberation_Sans',sans-serif]">
        4
      </div>
    </>
  );
}

function Watermark() {
  const shadow = '[text-shadow:0_0_3px_#8f8f8f]';
  return (
    <div className="absolute left-[1473px] top-[822px] w-[350px] h-[170px] text-white pointer-events-none">
      <span className={`absolute left-[2px] top-[38px] text-[80px] leading-[84px] font-bold font-['Liberation_Sans',sans-serif] ${shadow}`}>Bai</span>
      <svg width="350" height="120" viewBox="0 0 350 120" className="absolute left-0 top-0" fill="#fff" stroke="#c9c9c9" strokeWidth="1.200">
        <ellipse cx="132" cy="46" rx="13" ry="17" />
        <ellipse cx="156" cy="21" rx="12" ry="17" />
        <ellipse cx="186" cy="23" rx="13" ry="17" />
        <ellipse cx="205" cy="53" rx="13" ry="17" />
        <path d="M169 47c14 0 22 14 31 30 9 17 2 34-16 34-9 0-10-4-16-4s-8 4-17 4c-18 0-24-17-15-32 8-16 19-32 33-32z" />
      </svg>
      <span className="absolute left-[146px] top-[62px] text-[40px] leading-[44px] font-['Liberation_Sans',sans-serif] text-[#f1f1f1] [text-shadow:0_0_2px_#777]">du</span>
      <span className={`absolute left-[224px] top-[50px] text-[57px] leading-[62px] font-bold font-['Noto_Sans_CJK_SC',sans-serif] ${shadow}`}>经验</span>
      <span className={`absolute left-0 top-[118px] text-[42px] leading-[50px] tracking-[0.3px] whitespace-nowrap font-['Liberation_Sans',sans-serif] ${shadow}`}>jingyan.baidu.com</span>
    </div>
  );
}

export default function App() {
  return (
    <div className="w-[1920px] h-[1030px] relative overflow-hidden flex flex-col bg-[#f4f5f8] text-[15px] text-[#434a57] font-['Noto_Sans','Noto_Sans_CJK_SC',sans-serif]">
      <Tabs />
      <div className="bg-white h-[120px] shrink-0 shadow-[0_1px_4px_rgba(0,0,0,0.12)] relative z-10">
        <TopMenu />
        <Ribbon />
      </div>
      <div className="flex-1 flex min-h-0">
        <LeftRuler />
        <div className="w-[1827px] flex flex-col shrink-0 min-h-0">
          <TopRuler />
          <div className="flex-1 min-h-0"><Page /></div>
        </div>
        <ScrollBar />
        <RightPanel />
      </div>
      <StatusBar />
      <div className="absolute left-[1px] top-[897px] w-[13px] h-[71px] rounded-[4px] bg-[#4b4f5b] flex items-end pb-[6px] pl-[2px] z-10">
        <div className="w-[9px] h-[22px] bg-[repeating-linear-gradient(0deg,#3fc7a0_0,#c9d65a_2px,#4b4f5b_2px,#4b4f5b_3px)]" />
      </div>
      <Watermark />
      <div className="z-20"><AlignMenu /><Annotation /></div>
    </div>
  );
}
